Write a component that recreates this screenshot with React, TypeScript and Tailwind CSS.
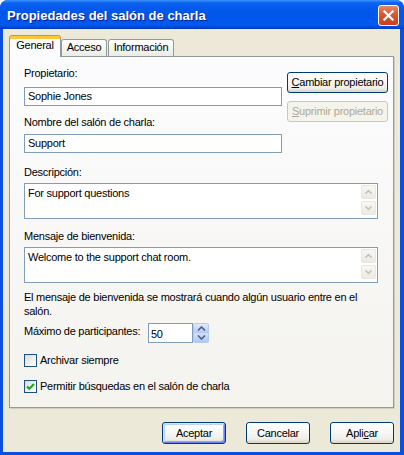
import type { ReactNode } from 'react'

const btn = 'flex items-center justify-center rounded-[3px] border text-[11px] leading-none tracking-[-0.25px]'
const btnNormal = 'border-[#003C74] text-black bg-[linear-gradient(180deg,#FFFFFF_0%,#F7F7F4_45%,#EFEEE9_80%,#D8D3C6_100%)]'
const btnDefault = 'shadow-[inset_1px_1px_0_#CEE7FF,inset_-1px_-1px_0_#6982EE,inset_2px_2px_0_#BCD4F6,inset_-2px_-2px_0_#89ADE4]'
const btnDisabled = 'border-[#C9C7BA] text-[#ACA899] bg-[#F5F4EA]'

const label = 'text-[11px] leading-[14px] tracking-[-0.25px] text-black whitespace-nowrap'
const field = 'border border-[#7F9DB9] bg-white text-[11px] tracking-[-0.25px] text-black'

function Chevron({ up, color, size = 15 }: { up: boolean; color: string; size?: number }) {
  return (
    <svg width={size} height={size - 1} viewBox="0 0 15 14">
      <path
        d={up ? 'M4 9 L7.5 5.5 L11 9' : 'M4 5 L7.5 8.5 L11 5'}
        fill="none"
        stroke={color}
        strokeWidth="2"
      />
    </svg>
  )
}

function MemoBox({ text }: { text: string }) {
  return (
    <div className={`flex h-[36px] w-[354px] ${field}`}>
      <div className="flex-1 px-[3px] pt-[2px] leading-[14px]">{text}</div>
      <div className="flex flex-col gap-[2px] pt-[1px] pr-[1px]">
        {[true, false].map(up => (
          <div
            key={String(up)}
            className="flex h-[14px] w-[15px] items-center justify-center rounded-[2px] border border-[#E9E7DF] bg-[linear-gradient(180deg,#F8F7F3,#ECEAE2)]"
          >
            <Chevron up={up} color="#C9C6B8" />
          </div>
        ))}
      </div>
    </div>
  )
}

function CheckBox({ checked, children }: { checked: boolean; children: ReactNode }) {
  return (
    <div className="flex h-[13px] items-start">
      <div className="flex h-[13px] w-[13px] items-center justify-center border border-[#1C5180] bg-[linear-gradient(135deg,#DCDBD5,#FFFFFF)]">
        {checked && (
          <svg width="11" height="11" viewBox="0 0 11 11">
            <path d="M2 5.5 L4.3 7.8 L9 3" fill="none" stroke="#21A121" strokeWidth="2" />
          </svg>
        )}
      </div>
      <span className="ml-[3px] text-[11px] leading-[13px] tracking-[-0.25px] text-black">{children}</span>
    </div>
  )
}

export default function App() {
  return (
    <div className="h-[455px] w-[404px] bg-white font-['Liberation_Sans',Arial,sans-serif]">
      <div className="flex h-full w-full flex-col overflow-hidden rounded-t-[8px] bg-[#0A4FDE]">
        {/* Title bar */}
        <div className="flex h-[29px] shrink-0 items-start bg-[linear-gradient(180deg,#3D95FF_0%,#0A60EE_10%,#0055EA_45%,#0058EE_85%,#0048D8_94%,#0036B8_100%)] pl-[7px] pr-[5px]">
          <span className="pt-[8px] text-[13px] font-bold leading-[16px] text-white [text-shadow:1px_1px_0_#0F1E8C]">
            Propiedades del salón de charla
          </span>
          <div className="ml-auto mt-[5px] flex h-[21px] w-[21px] items-center justify-center rounded-[3px] border border-white bg-[linear-gradient(180deg,#E8876A_0%,#D9562F_45%,#C8401C_100%)]">
            <svg width="13" height="13" viewBox="0 0 13 13">
              <path d="M2.5 2.5 L10.5 10.5 M10.5 2.5 L2.5 10.5" stroke="white" strokeWidth="2.2" strokeLinecap="square" />
            </svg>
          </div>
        </div>

        {/* Body */}
        <div className="mb-[3px] ml-[3px] mr-[4px] flex flex-1 flex-col bg-[#ECE9D8]">
          {/* Tabs */}
          <div className="flex h-[27px] items-end pl-[6px]">
            <div className="relative z-10 -mb-px flex h-[21px] w-[52px] justify-center rounded-t-[3px] border-x border-t-[3px] border-x-[#919B9C] border-t-[#FFC83C] bg-[#FCFCFE] text-[11px] leading-[12px] tracking-[-0.25px] text-black shadow-[0_-1px_0_#E68B2C]">
              General
            </div>
            <div className="flex h-[17px] w-[46px] justify-center rounded-t-[3px] border border-b-0 border-[#919B9C] bg-[linear-gradient(180deg,#FFFFFF,#ECEBE6)] pt-[1px] text-[11px] leading-[12px] tracking-[-0.25px] text-black">
              Acceso
            </div>
            <div className="ml-px flex h-[17px] w-[66px] justify-center rounded-t-[3px] border border-b-0 border-[#919B9C] bg-[linear-gradient(180deg,#FFFFFF,#ECEBE6)] pt-[1px] text-[11px] leading-[12px] tracking-[-0.25px] text-black">
              Información
            </div>
          </div>

          {/* Panel */}
          <div className="ml-[6px] flex h-[352px] w-[385px] flex-col border border-[#919B9C] bg-[linear-gradient(180deg,#FCFCFE,#F4F3EE)] pl-[14px] pt-[9px] shadow-[1px_1px_0_#D0CEBF]">
            <div className="flex">
              <div className="flex w-[258px] flex-col">
                <div className={label}>Propietario:</div>
                <div className={`mt-[7px] h-[19px] px-[3px] leading-[17px] ${field}`}>Sophie Jones</div>
                <div className={`mt-[9px] ${label}`}>Nombre del salón de charla:</div>
                <div className={`mt-[5px] h-[19px] px-[3px] leading-[17px] ${field}`}>Support</div>
              </div>
              <div className="ml-[5px] flex flex-col pt-[6px]">
                <div className={`h-[21px] w-[101px] ${btn} ${btnNormal}`}>
                  <span className="underline underline-offset-[1px]">C</span>ambiar propietario
                </div>
                <div className={`mt-[8px] h-[21px] w-[101px] ${btn} ${btnDisabled}`}>
                  <span className="underline underline-offset-[1px]">S</span>uprimir propietario
                </div>
              </div>
            </div>

            <div className={`mt-[12px] ${label}`}>Descripción:</div>
            <div className="mt-[4px]">
              <MemoBox text="For support questions" />
            </div>

            <div className={`mt-[10px] ${label}`}>Mensaje de bienvenida:</div>
            <div className="mt-[4px]">
              <MemoBox text="Welcome to the support chat room." />
            </div>

            <div className={`mt-[7px] ${label}`}>
              El mensaje de bienvenida se mostrará cuando algún usuario entre en el
              <br />
              salón.
            </div>

            <div className="mt-[5px] flex h-[20px] items-start">
              <div className={`w-[124px] pt-[1px] ${label}`}>Máximo de participantes:</div>
              <div className={`h-[20px] w-[45px] px-[2px] pt-[1px] leading-[18px] ${field}`}>50</div>
              <div className="flex h-[20px] w-[16px] flex-col">
                <div className="flex h-[10px] items-center justify-center rounded-t-[2px] border border-[#B7C9F3] bg-[linear-gradient(180deg,#E2EAFE,#BACCF6)]">
                  <svg width="9" height="5" viewBox="0 0 9 5">
                    <path d="M1 4.5 L4.5 1 L8 4.5" fill="none" stroke="#4D6185" strokeWidth="1.6" />
                  </svg>
                </div>
                <div className="flex h-[10px] items-center justify-center rounded-b-[2px] border border-t-0 border-[#B7C9F3] bg-[linear-gradient(180deg,#D3DFFC,#B4C7F5)]">
                  <svg width="9" height="5" viewBox="0 0 9 5">
                    <path d="M1 0.5 L4.5 4 L8 0.5" fill="none" stroke="#4D6185" strokeWidth="1.6" />
                  </svg>
                </div>
              </div>
            </div>

            <div className="mt-[11px]">
              <CheckBox checked={false}>Archivar siempre</CheckBox>
            </div>
            <div className="mt-[13px]">
              <CheckBox checked>Permitir búsquedas en el salón de charla</CheckBox>
            </div>
          </div>

          {/* Dialog buttons */}
          <div className="mt-[14px] flex justify-end gap-[20px] pr-[6px]">
            <div className={`h-[22px] w-[64px] ${btn} ${btnNormal} ${btnDefault}`}>Aceptar</div>
            <div className={`h-[22px] w-[64px] ${btn} ${btnNormal}`}>Cancelar</div>
            <div className={`h-[22px] w-[64px] ${btn} ${btnNormal}`}>
              Apli<span className="underline underline-offset-[1px]">c</span>ar
            </div>
          </div>
        </div>
      </div>
    </div>
  )
}
